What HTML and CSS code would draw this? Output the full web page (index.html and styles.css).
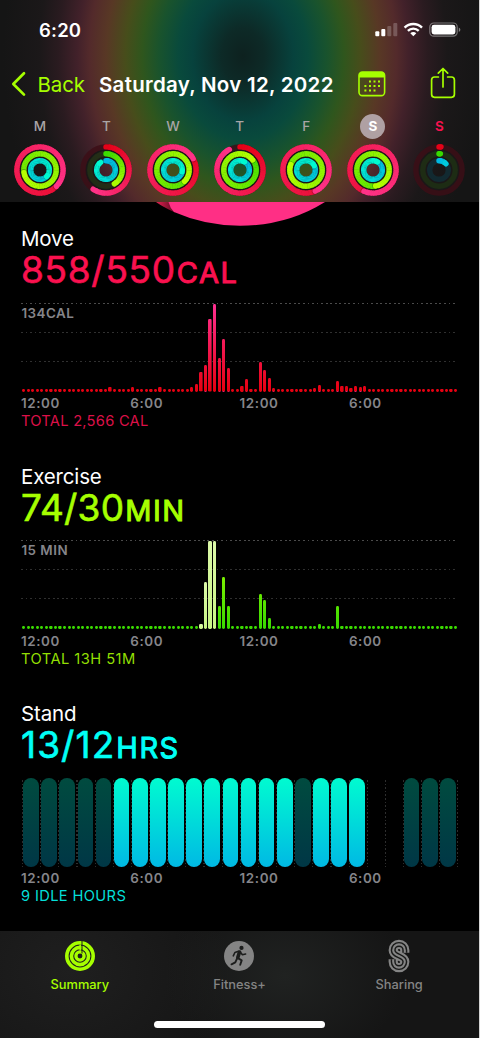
FILE: index.html
```html
<!DOCTYPE html>
<html lang="en">
<head>
    <meta charset="UTF-8">
    <meta name="viewport" content="width=device-width, initial-scale=1.0">
    <title>Activity</title>
    <link rel="stylesheet" href="styles.css">
</head>
<body>
    <div class="phone">
        <header class="header">
            <div class="status">
                <span class="time">6:20</span>
                <svg class="status-icons" width="86" height="16" viewBox="0 0 86 16">
                    <g fill="#fff">
                        <rect x="0.3" y="9.3" width="4" height="5" rx="1"/>
                        <rect x="6.3" y="7" width="4" height="7.3" rx="1"/>
                        <rect x="12.3" y="4" width="4" height="10.3" rx="1" opacity=".22"/>
                        <rect x="18.3" y="1" width="4" height="13.3" rx="1" opacity=".22"/>
                    </g>
                    <g fill="none" stroke="#fff" stroke-width="2.4">
                        <path d="M29.6 5.6a12.3 12.3 0 0 1 17.4 0"/>
                        <path d="M32.9 8.9a7.6 7.6 0 0 1 10.8 0"/>
                    </g>
                    <path d="M35.3 11.3a4.2 4.2 0 0 1 6 0l-3 3z" fill="#fff"/>
                    <rect x="54.8" y="1" width="27.4" height="13.2" rx="4" fill="none" stroke="#fff" stroke-opacity=".4" stroke-width="1.2"/>
                    <rect x="56.6" y="2.8" width="23.8" height="9.6" rx="2.4" fill="#fff"/>
                    <path d="M83.8 5.4q1.6.7 1.6 2.3t-1.6 2.3z" fill="#fff" opacity=".45"/>
                </svg>
            </div>
            <nav class="nav">
                <svg class="chevron" width="16" height="26" viewBox="0 0 16 26">
                    <path d="M13 2.3L2.3 13 13 23.6" fill="none" stroke="#a6ff00" stroke-width="2.7" stroke-linecap="round" stroke-linejoin="round"/>
                </svg>
                <span class="back">Back</span>
                <h1 class="date">Saturday, Nov 12, 2022</h1>
                <svg class="calendar" width="28" height="26" viewBox="0 0 28 26">
                    <rect x="1" y="1" width="25.6" height="23.6" rx="3.4" fill="none" stroke="#a6ff00" stroke-width="1.6"/>
                    <path d="M1 6.5V4.4Q1 1 4.4 1h18.8q3.4 0 3.4 3.4v2.1z" fill="#a6ff00"/>
                    <path d="M11 10.6h2M15.5 10.6h2M20 10.6h2M6.4 15h2M11 15h2M15.5 15h2M20 15h2M6.4 19.4h2M11 19.4h2M15.5 19.4h2" stroke="#a6ff00" stroke-width="2"/>
                </svg>
                <svg class="share" width="26" height="32" viewBox="0 0 26 32">
                    <path d="M8.4 10H4.6Q1.6 10 1.6 13v14.3q0 3 3 3h16.8q3 0 3-3V13q0-3-3-3h-3.8M13 20V2M8.3 6.2L13 1.5l4.7 4.7" fill="none" stroke="#a6ff00" stroke-width="1.7" stroke-linecap="round" stroke-linejoin="round"/>
                </svg>
            </nav>
            <div class="week" id="week"></div>
        </header>

        <main class="content">
            <svg class="big-ring" width="479" height="24" viewBox="0 0 479 24">
                <defs>
                    <linearGradient id="tail" x1="157" x2="174" y1="0" y2="0" gradientUnits="userSpaceOnUse">
                        <stop offset="0" stop-color="#e01f50"/>
                        <stop offset="1" stop-color="#5c0c20"/>
                    </linearGradient>
                </defs>
                <path d="M156 0Q163 5 175 10.5V0z" fill="url(#tail)"/>
                <path d="M168.5 0Q170 6 174 10Q205 23.7 240 23.7Q287 23.7 325 0z" fill="#ff2f85"/>
            </svg>

            <section class="metric move">
                <h2>Move</h2>
                <div class="value">858/550<span class="unit">CAL</span></div>
                <div class="plot" id="move-plot"><span class="peak">134CAL</span></div>
                <div class="hours"><span>12:00</span><span>6:00</span><span>12:00</span><span>6:00</span></div>
                <div class="total">TOTAL 2,566 CAL</div>
            </section>

            <section class="metric exercise">
                <h2>Exercise</h2>
                <div class="value">74/30<span class="unit">MIN</span></div>
                <div class="plot" id="exercise-plot"><span class="peak">15 MIN</span></div>
                <div class="hours"><span>12:00</span><span>6:00</span><span>12:00</span><span>6:00</span></div>
                <div class="total">TOTAL 13H 51M</div>
            </section>

            <section class="metric stand">
                <h2>Stand</h2>
                <div class="value">13/12<span class="unit">HRS</span></div>
                <div class="stand-plot" id="stand-plot"></div>
                <div class="hours"><span>12:00</span><span>6:00</span><span>12:00</span><span>6:00</span></div>
                <div class="total">9 IDLE HOURS</div>
            </section>
        </main>

        <footer class="tabbar">
            <div class="tabs">
                <div class="tab active">
                    <svg width="34" height="34" viewBox="0 0 34 34">
                        <g fill="none" stroke="#a6ff00">
                            <circle cx="17" cy="17" r="13.2" stroke-width="3.6"/>
                            <circle cx="17" cy="17" r="8.6" stroke-width="3.6"/>
                            <circle cx="17" cy="17" r="4.1" stroke-width="3.3"/>
                        </g>
                        <path d="M19 2v12.5" stroke="#1c1d1c" stroke-width="1"/>
                        <path d="M17.2 5.5v1.5M17.2 10v1.5" stroke="#a6ff00" stroke-width="1.5"/>
                    </svg>
                    <span>Summary</span>
                </div>
                <div class="tab">
                    <svg width="34" height="34" viewBox="0 0 34 34">
                        <circle cx="17" cy="17" r="15" fill="#848484"/>
                        <circle cx="19.5" cy="8.9" r="2.1" fill="#1c1d1c"/>
                        <g fill="none" stroke="#1c1d1c" stroke-linecap="round" stroke-linejoin="round">
                            <path d="M17.5 13l-1.7 5.5" stroke-width="3.6"/>
                            <path d="M16.5 12.3l-3.6 1.2-1.6 3.3M18.4 13.3l2 2.5 3.2-.8" stroke-width="1.6"/>
                            <path d="M16.3 19.4l3.4 2-1.5 4.4M15 19.7l-1.7 3.7-3.8 1.9" stroke-width="1.9"/>
                        </g>
                    </svg>
                    <span>Fitness+</span>
                </div>
                <div class="tab">
                    <svg width="34" height="34" viewBox="-6 0 34 34">
                        <g fill="none">
                            <path d="M16.8 13.8V11.2A5.8 5.8 0 0 0 5.2 11.2C5.2 18 16.8 16 16.8 22.8A5.8 5.8 0 0 1 5.2 22.8V20.2" stroke="#848484" stroke-width="9.2"/>
                            <path d="M16.8 13.8V11.2A5.8 5.8 0 0 0 5.2 11.2C5.2 18 16.8 16 16.8 22.8A5.8 5.8 0 0 1 5.2 22.8V20.2" stroke="#181918" stroke-width="5"/>
                            <path d="M16.8 13.8V11.2A5.8 5.8 0 0 0 5.2 11.2C5.2 18 16.8 16 16.8 22.8A5.8 5.8 0 0 1 5.2 22.8V20.2" stroke="#848484" stroke-width="2.1"/>
                        </g>
                    </svg>
                    <span>Sharing</span>
                </div>
            </div>
            <div class="home-indicator"></div>
        </footer>
    </div>

    <script src="script.js"></script>
</body>
</html>
```

FILE: styles.css
```css
body {
    margin: 0;
    background-color: #d4d4d4;
    font-family: Inter, "Liberation Sans", sans-serif;
}
h1, h2 {
    margin: 0;
}
svg {
    display: block;
}
.phone {
    width: 479px;
    height: 1038px;
    display: flex;
    flex-direction: column;
    background-color: #000;
    overflow: hidden;
}

/* header */
.header {
    height: 202px;
    flex: none;
    background: radial-gradient(ellipse 240px 310px at 243px 56px,
        #0d211f 0%, #0d2a27 9%, #07423d 21%, #094a3c 27%, #19532d 35%,
        #2f561d 42%, #474d1b 49%, #583825 57%, #532a2b 64%, #42212a 69%,
        #2a1b20 77%, #1b1819 85%, #151515 100%);
}
.status {
    display: flex;
    justify-content: space-between;
    align-items: center;
    height: 24px;
    padding: 18px 18px 0 39px;
}
.time {
    color: #fff;
    font-size: 18.5px;
    font-weight: 600;
    letter-spacing: .2px;
}
.nav {
    display: flex;
    align-items: center;
    height: 32px;
    margin-top: 26px;
    padding-left: 11px;
}
.back {
    width: 50px;
    margin-left: 10.5px;
    color: #a6ff00;
    font-size: 20.5px;
    letter-spacing: -.1px;
}
.date {
    width: 248px;
    margin-left: 11.5px;
    color: #fff;
    font-size: 20.5px;
    font-weight: 600;
    letter-spacing: .27px;
    white-space: nowrap;
}
.calendar {
    margin-left: 11px;
}
.share {
    margin-left: 44px;
    margin-top: -2px;
}
.week {
    display: flex;
    margin: 14px 0 0 6.6px;
}
.day {
    width: 66.6px;
    display: flex;
    flex-direction: column;
    align-items: center;
}
.day-name {
    width: 25px;
    height: 25px;
    line-height: 25px;
    border-radius: 50%;
    text-align: center;
    color: #a9a5a6;
    font-size: 13.5px;
    font-weight: 500;
}
.day-name.selected {
    background-color: #afa0a3;
    color: #fff;
    font-weight: 700;
}
.day-name.today {
    color: #fa114f;
    font-weight: 600;
}
.rings {
    margin-top: 4px;
}

/* metrics */
.content {
    height: 729px;
    flex: none;
    overflow: hidden;
}
.metric {
    height: 237.7px;
    padding-left: 21px;
}
.metric h2 {
    height: 24px;
    line-height: 25px;
    color: #fff;
    font-size: 20.5px;
    font-weight: 400;
    letter-spacing: -.15px;
}
.value {
    height: 38px;
    line-height: 39px;
    font-size: 37px;
    white-space: nowrap;
    -webkit-text-stroke: .6px currentColor;
}
.unit {
    margin-left: 1px;
    font-size: 29px;
    -webkit-text-stroke-width: 1px;
}
.move .value { color: #fa114f; letter-spacing: .7px; }
.exercise .value { color: #a6ff00; letter-spacing: .2px; }
.stand .value { color: #00fff6; letter-spacing: 1.1px; }
.move .unit, .exercise .unit, .stand .unit { letter-spacing: 1.5px; }

.plot {
    position: relative;
    display: flex;
    align-items: flex-end;
    width: 436.7px;
    height: 89px;
    margin-top: 14.5px;
    margin-left: .4px;
    background:
        repeating-linear-gradient(90deg, #4b4b4b 0 1.8px, transparent 1.8px 4.548px) 0 0 / 100% 1px no-repeat,
        repeating-linear-gradient(90deg, #303030 0 1.8px, transparent 1.8px 4.548px) 0 29px / 100% 1px no-repeat,
        repeating-linear-gradient(90deg, #303030 0 1.8px, transparent 1.8px 4.548px) 0 58px / 100% 1px no-repeat;
}
.peak {
    position: absolute;
    top: 2px;
    left: 0;
    line-height: 17px;
    color: #85858a;
    font-size: 13.4px;
    font-weight: 600;
    letter-spacing: .5px;
}
.slot {
    width: 4.549px;
    display: flex;
    justify-content: center;
}
.bar {
    width: 3.2px;
    border-radius: 1.4px;
}
.move .bar {
    background: linear-gradient(to top, #e6000f, #ff3092 88px) bottom / 100% 88px;
}
.exercise .bar {
    background: linear-gradient(to top, #38d900, #a6ff00 88px) bottom / 100% 88px;
}
.exercise .bar.workout {
    background: linear-gradient(to top, #c8f583, #dcf9a9);
}
.stand-plot {
    display: flex;
    width: 436.4px;
    height: 89px;
    margin-top: 14.5px;
    margin-left: .6px;
    background: repeating-linear-gradient(#000 0 2px, transparent 2px 3.6px),
        repeating-linear-gradient(90deg, #2e2e2e 0 1.2px, transparent 1.2px 18.14px);
}
.hour {
    width: 18.14px;
    flex: none;
    box-sizing: border-box;
    padding: 0 .9px 0 1.6px;
}
.hour div {
    height: 89px;
    border-radius: 8px;
}
.hour .stood {
    background: linear-gradient(#00fbd0, #00b9e4);
}
.hour .idle {
    background: linear-gradient(#004b3f, #003746);
}
.hours {
    display: grid;
    grid-template-columns: repeat(4, 109.3px);
    margin-top: 3.5px;
    line-height: 17px;
    color: #85858a;
    font-size: 13.4px;
    font-weight: 600;
    letter-spacing: .6px;
}
.total {
    line-height: 18px;
    font-size: 14.7px;
    letter-spacing: .25px;
}
.move .total { color: #dc1048; }
.exercise .total { color: #92df03; letter-spacing: .45px; }
.stand .total { color: #04dfd8; letter-spacing: .35px; }

/* tab bar */
.tabbar {
    height: 107px;
    flex: none;
    background: radial-gradient(ellipse 120px 90px at 285px 45px, #202221, transparent),
        radial-gradient(ellipse 160px 130px at 70px 40px, #1f1f1f, transparent), #151515;
}
.tabs {
    display: grid;
    grid-template-columns: repeat(3, 1fr);
    height: 90px;
}
.tab {
    display: flex;
    flex-direction: column;
    align-items: center;
    padding-top: 8px;
    color: #848484;
    font-size: 12.8px;
    font-weight: 500;
    line-height: 24px;
}
.tab.active {
    color: #a6ff00;
}
.home-indicator {
    width: 171px;
    height: 6.5px;
    margin: 0 auto;
    border-radius: 4px;
    background-color: #fff;
}
```

FILE: script.js
```js
const week = [
    { name: 'M', rings: [1.37, 1.72, 1.37] },
    { name: 'T', rings: [0.59, 0.41, 0.9] },
    { name: 'W', rings: [1.165, 1.37, 1.28] },
    { name: 'T', rings: [0.92, 1.14, 1.08] },
    { name: 'F', rings: [1.43, 1.8, 1.17] },
    { name: 'S', rings: [1.56, 1.47, 1.08], state: 'selected' },
    { name: 'S', rings: [0.01, 0.01, 0.13], state: 'today' }
];

const ringStyles = [
    { r: 23.1, from: [228, 0, 20], to: [255, 50, 135], track: 'rgba(60, 14, 22, .85)' },
    { r: 16.2, from: [52, 218, 0], to: [182, 255, 0], track: 'rgba(30, 48, 20, .85)' },
    { r: 9.3, from: [0, 182, 228], to: [0, 250, 208], track: 'rgba(18, 44, 52, .9)' }
];

function mix(a, b, t) {
    return 'rgb(' + a.map((v, i) => Math.round(v + (b[i] - v) * t)).join(',') + ')';
}

function point(r, turn) {
    const angle = turn * Math.PI * 2;
    return (27 + r * Math.sin(angle)).toFixed(2) + ' ' + (27 - r * Math.cos(angle)).toFixed(2);
}

function ring(style, progress) {
    const { r, from, to, track } = style;
    const start = Math.max(0, progress - 1);
    const span = progress - start;
    const steps = Math.max(2, Math.round(span * 60));
    let svg = `<circle cx="27" cy="27" r="${r}" fill="none" stroke="${track}" stroke-width="5.4"/>`;
    for (let i = 0; i < steps; i++) {
        const a = start + span * i / steps;
        const b = start + span * (i + 1) / steps + 0.004;
        const color = mix(from, to, Math.min(1, b / Math.max(progress, 0.45)));
        const cap = (i === 0 && progress < 1) || i === steps - 1 ? 'round' : 'butt';
        if (i === steps - 1 && progress > 1) {
            svg += `<path d="M${point(r, b)}L${point(r, b + 0.006)}" stroke="rgba(0,0,0,.22)" stroke-width="5.6" stroke-linecap="round"/>`;
        }
        svg += `<path d="M${point(r, a)}A${r} ${r} 0 0 1 ${point(r, b)}" fill="none" stroke="${color}" stroke-width="5.4" stroke-linecap="${cap}"/>`;
    }
    return svg;
}

document.getElementById('week').innerHTML = week.map(day => `
    <div class="day">
        <span class="day-name ${day.state || ''}">${day.name}</span>
        <svg class="rings" width="54" height="54" viewBox="0 0 54 54">
            <circle cx="27" cy="27" r="19.6" fill="none" stroke="#1b1718" stroke-width="2.4"/>
            <circle cx="27" cy="27" r="12.7" fill="none" stroke="#1b1718" stroke-width="2.4"/>
            ${day.rings.map((p, i) => ring(ringStyles[i], p)).join('')}
        </svg>
    </div>`).join('');

// one bar per quarter of an hour, only the ones above the base line are listed
const move = {
    19: 4.6, 24: 5, 30: 5, 37: 5, 38: 8, 39: 19.3, 40: 26.3, 41: 72.5, 42: 88,
    43: 33.5, 44: 52.3, 45: 23.5, 48: 6, 49: 12.7, 52: 30, 53: 22, 54: 14, 55: 3.6,
    64: 3.8, 65: 6.3, 69: 10.3, 70: 6, 71: 5.2, 72: 4, 73: 5.3, 74: 4.3, 75: 6
};
const exercise = {
    39: 5.5, 40: 47, 41: 88, 42: 88, 43: 23, 44: 52.5, 45: 23,
    52: 35, 53: 29, 54: 11.5, 65: 5.5, 69: 23
};

function drawBars(id, values, workout) {
    let html = '';
    for (let i = 0; i < 96; i++) {
        const type = workout.includes(i) ? 'bar workout' : 'bar';
        html += `<div class="slot"><div class="${type}" style="height: ${values[i] || 3}px"></div></div>`;
    }
    document.getElementById(id).insertAdjacentHTML('beforeend', html);
}

drawBars('move-plot', move, []);
drawBars('exercise-plot', exercise, [39, 40, 41, 42]);

// i = idle, s = stood, - = no data
document.getElementById('stand-plot').innerHTML = 'iiiiissssssssssisss--iii'.split('').map(h => {
    const type = { i: 'idle', s: 'stood' }[h] || '';
    return `<div class="hour"><div class="${type}"></div></div>`;
}).join('');
```
